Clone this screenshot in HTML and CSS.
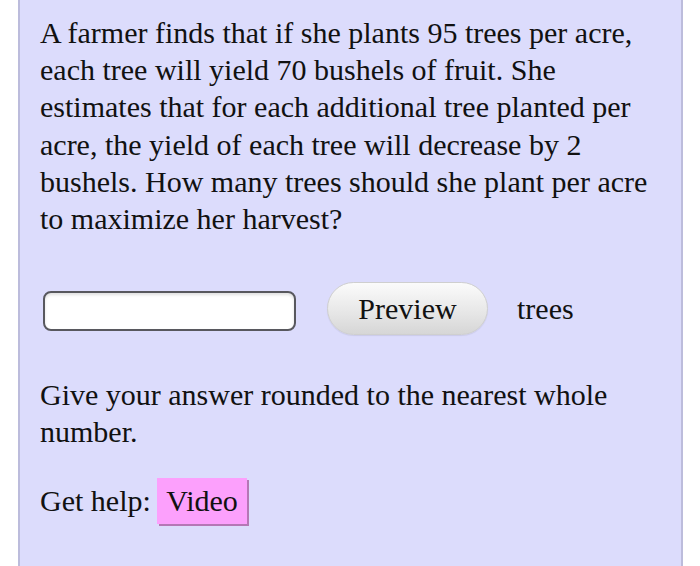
FILE: index.html
```html
<!DOCTYPE html>
<html>
<head>
<meta charset="utf-8">
<link rel="stylesheet" href="styles.css">
</head>
<body>
<div class="panel">
  <p class="question">A farmer finds that if she plants 95 trees per acre, each tree will yield 70 bushels of fruit. She estimates that for each additional tree planted per acre, the yield of each tree will decrease by 2 bushels. How many trees should she plant per acre to maximize her harvest?</p>
  <div class="answer-row">
    <input class="answer" type="text">
    <button class="preview">Preview</button>
    <span class="unit">trees</span>
  </div>
  <p class="note">Give your answer rounded to the nearest whole number.</p>
  <p class="help">Get help: <span class="video">Video</span></p>
</div>
</body>
</html>
```
FILE: styles.css
```css
html, body {
  margin: 0;
  padding: 0;
  background: #ffffff;
}
.panel {
  margin-left: 18px;
  width: 665px;
  min-height: 566px;
  box-sizing: border-box;
  background: #dcdcfc;
  border-left: 2px solid #bcbcdc;
  border-right: 2px solid #bcbcdc;
  padding: 14px 20px 0 20px;
  font-family: "Liberation Serif", "Times New Roman", serif;
  font-size: 30px;
  line-height: 37.2px;
  color: #111111;
}
.question {
  margin: 0;
}
.answer-row {
  display: flex;
  align-items: flex-start;
  margin-top: 45px;
  margin-left: 3px;
}
.answer {
  width: 253px;
  height: 40px;
  box-sizing: border-box;
  margin-top: 9px;
  border: 2px solid #58585e;
  border-radius: 8px;
  background: #ffffff;
  box-shadow: inset 0 2px 3px rgba(0,0,0,0.12);
  padding: 0;
}
.preview {
  margin-left: 31px;
  width: 161px;
  height: 53px;
  box-sizing: border-box;
  border: 1px solid #cfcfcf;
  border-radius: 27px;
  background: linear-gradient(#fbfbfb, #e6e6e6 60%, #d6d6d6);
  font-family: "Liberation Serif", "Times New Roman", serif;
  font-size: 30px;
  color: #111111;
  padding: 0;
  box-shadow: 0 1px 1px rgba(0,0,0,0.08);
}
.unit {
  margin-left: 29px;
  line-height: 53px;
}
.note {
  margin: 41px 0 0 0;
}
.help {
  margin: 27px 0 0 0;
}
.video {
  display: inline-block;
  background: #fca0fc;
  padding: 4px 9px 5px 9px;
  margin-left: -1px;
  box-shadow: 2px 2px 0 #b577b5;
  line-height: 37px;
}
```
